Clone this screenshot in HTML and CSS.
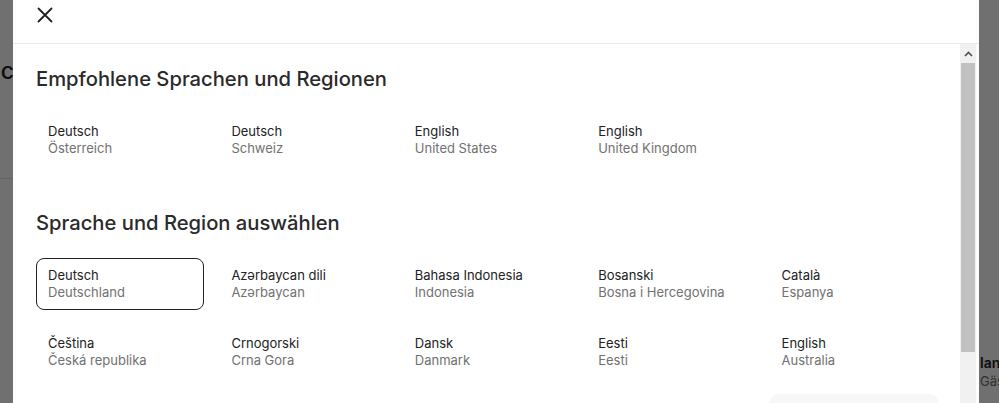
FILE: index.html
```html
<!DOCTYPE html>
<html lang="de">
<head>
<meta charset="utf-8">
<title>Sprache und Region</title>
<link rel="stylesheet" href="styles.css">
</head>
<body>
<div class="page">
  <div class="page-left">
    <div class="page-title">Beliebte Unterkünfte: Magic</div>
    <div class="page-line"></div>
  </div>
  <div class="page-mid"></div>
  <div class="page-right">
    <div class="bg-bold">lanung</div>
    <div class="bg-sub">Gäste</div>
  </div>
</div>
<div class="overlay"></div>
<div class="modal">
  <header class="modal-head">
    <button class="close" aria-label="Schließen">
      <svg width="16" height="16" viewBox="0 0 16 16"><path d="M1.5 1.5 14.5 14.5M14.5 1.5 1.5 14.5" stroke="#222" stroke-width="1.8" fill="none" stroke-linecap="round"/></svg>
    </button>
  </header>
  <div class="modal-body">
    <div class="content">
      <h2 class="heading">Empfohlene Sprachen und Regionen</h2>
      <div class="grid">
        <div class="opt"><div class="lang">Deutsch</div><div class="region">Österreich</div></div>
        <div class="opt"><div class="lang">Deutsch</div><div class="region">Schweiz</div></div>
        <div class="opt"><div class="lang">English</div><div class="region">United States</div></div>
        <div class="opt"><div class="lang">English</div><div class="region">United Kingdom</div></div>
      </div>
      <h2 class="heading heading-2">Sprache und Region auswählen</h2>
      <div class="grid">
        <div class="opt selected"><div class="lang">Deutsch</div><div class="region">Deutschland</div></div>
        <div class="opt"><div class="lang">Azərbaycan dili</div><div class="region">Azərbaycan</div></div>
        <div class="opt"><div class="lang">Bahasa Indonesia</div><div class="region">Indonesia</div></div>
        <div class="opt"><div class="lang">Bosanski</div><div class="region">Bosna i Hercegovina</div></div>
        <div class="opt"><div class="lang">Català</div><div class="region">Espanya</div></div>
        <div class="opt"><div class="lang">Čeština</div><div class="region">Česká republika</div></div>
        <div class="opt"><div class="lang">Crnogorski</div><div class="region">Crna Gora</div></div>
        <div class="opt"><div class="lang">Dansk</div><div class="region">Danmark</div></div>
        <div class="opt"><div class="lang">Eesti</div><div class="region">Eesti</div></div>
        <div class="opt"><div class="lang">English</div><div class="region">Australia</div></div>
        <div class="opt"><div class="lang">English</div><div class="region">Canada</div></div>
        <div class="opt"><div class="lang">English</div><div class="region">Guyana</div></div>
        <div class="opt"><div class="lang">English</div><div class="region">India</div></div>
        <div class="opt"><div class="lang">English</div><div class="region">Ireland</div></div>
        <div class="opt hover"><div class="lang">English</div><div class="region">New Zealand</div></div>
      </div>
    </div>
    <div class="scrollbar">
      <div class="sb-up"><svg width="9" height="6" viewBox="0 0 9 6"><path d="M1 5 4.5 1.5 8 5" stroke="#505050" stroke-width="1.6" fill="none"/></svg></div>
      <div class="sb-thumb"></div>
      <div class="sb-track"></div>
    </div>
  </div>
</div>
</body>
</html>
```
FILE: styles.css
```css
* { box-sizing: border-box; }
html, body { margin: 0; padding: 0; }
body {
  width: 999px;
  height: 403px;
  overflow: hidden;
  position: relative;
  font-family: Inter, "Noto Sans", "Liberation Sans", sans-serif;
  color: #222;
  background: #fff;
}
.page {
  display: flex;
  height: 403px;
}
.page-left {
  width: 13px;
  overflow: hidden;
  display: flex;
  flex-direction: column;
  align-items: flex-end;
}
.page-title {
  margin-top: 57px;
  font-size: 23px;
  font-weight: 500;
  white-space: nowrap;
  color: #222;
  margin-right: -1px;
}
.page-line {
  margin-top: 93px;
  width: 13px;
  border-top: 1px solid #e4e4e4;
}
.page-mid { width: 966px; }
.page-right {
  width: 20px;
  overflow: hidden;
  padding-top: 353px;
  padding-left: 1px;
}
.bg-bold {
  font-size: 14px;
  font-weight: 600;
  white-space: nowrap;
  line-height: 19px;
}
.bg-sub {
  font-size: 13px;
  color: #717171;
  white-space: nowrap;
  line-height: 18px;
}
.overlay {
  position: absolute;
  inset: 0;
  background: rgba(0, 0, 0, 0.56);
}
.modal {
  position: absolute;
  left: 13px;
  top: 0;
  width: 966px;
  height: 403px;
  background: #fff;
  display: flex;
  flex-direction: column;
}
.modal-head {
  height: 44px;
  flex: none;
  border-bottom: 1px solid #ebebeb;
  display: flex;
  align-items: flex-start;
  padding: 7px 0 0 24px;
}
.close {
  border: 0;
  background: none;
  padding: 0;
  width: 16px;
  height: 16px;
  display: block;
}
.close svg { display: block; }
.modal-body {
  flex: 1;
  display: flex;
  overflow: hidden;
}
.content {
  width: 947px;
  flex: none;
  padding: 22px 0 0 23px;
}
.heading {
  margin: 0;
  font-size: 20.2px;
  line-height: 26px;
  font-weight: 500;
  color: #2a2a2a;
  letter-spacing: 0;
}
.heading-2 { margin-top: 44px; }
.grid {
  margin-top: 22px;
  display: grid;
  grid-template-columns: repeat(5, 168px);
  column-gap: 15.4px;
  row-gap: 16px;
}
.opt {
  height: 52px;
  border: 1px solid transparent;
  border-radius: 8px;
  padding: 8px 11px 0;
  font-size: 13px;
  line-height: 17px;
  white-space: nowrap;
}
.opt.selected { border-color: #222; }
.opt.hover { background: #f7f7f7; }
.lang { color: #222; }
.region { color: #717171; }
.scrollbar {
  width: 16px;
  flex: none;
  display: flex;
  flex-direction: column;
  background: #f1f1f1;
}
.sb-up {
  height: 19px;
  display: flex;
  align-items: center;
  justify-content: center;
}
.sb-up svg { display: block; }
.sb-thumb {
  height: 289px;
  background: #c1c1c1;
  margin: 0 1px;
}
.sb-track { flex: 1; }
```
